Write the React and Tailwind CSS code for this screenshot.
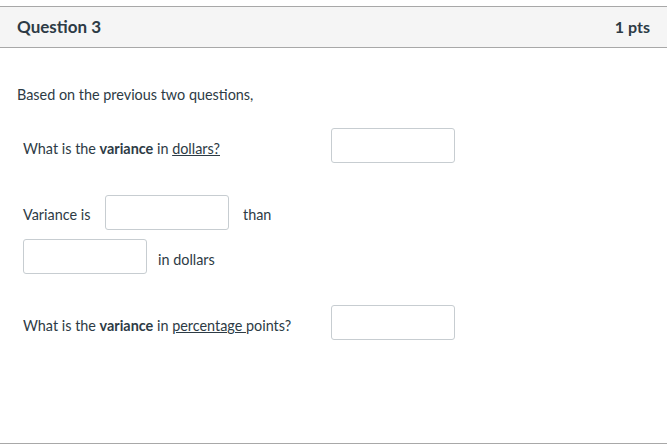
import React from "react";

const Box = ({ className = "" }) => (
  <input
    type="text"
    className={`h-[35px] w-[124px] rounded-[3px] border border-[#c7cdd1] bg-white ${className}`}
  />
);

export default function App() {
  return (
    <div className="min-h-[446px] bg-white pt-[6px] text-[14.4px] text-[#2d3b45] [font-family:Lato,'Liberation_Sans',sans-serif]">
      <div className="flex h-[438px] flex-col border-y border-[#a8a8a8]">
        {/* Header */}
        <div className="flex h-[41px] items-center justify-between border-b border-[#a8a8a8] bg-[#f5f5f5] pl-[17px] pr-[17px]">
          <h2 className="text-[17px] font-bold">Question 3</h2>
          <span className="text-[16px] font-bold">1 pts</span>
        </div>

        {/* Body */}
        <div className="pl-[17px] pt-[37px]">
          <p className="leading-[20px]">Based on the previous two questions,</p>

          <div className="mt-[23px] flex items-center pl-[6px]">
            <span className="w-[308px] pt-[7px]">
              What is the <b>variance</b> in <u>dollars?</u>
            </span>
            <Box />
          </div>

          <div className="mt-[32px] flex items-center pl-[6px]">
            <span className="w-[82px] pt-[5px]">Variance is</span>
            <Box />
            <span className="ml-[14px] pt-[5px]">than</span>
          </div>

          <div className="mt-[9px] flex items-center pl-[6px]">
            <Box />
            <span className="ml-[11px] pt-[6px]">in dollars</span>
          </div>

          <div className="mt-[31px] flex items-center pl-[6px]">
            <span className="w-[308px] pt-[7px]">
              What is the <b>variance</b> in <u>percentage </u>points?
            </span>
            <Box />
          </div>
        </div>
      </div>
    </div>
  );
}
